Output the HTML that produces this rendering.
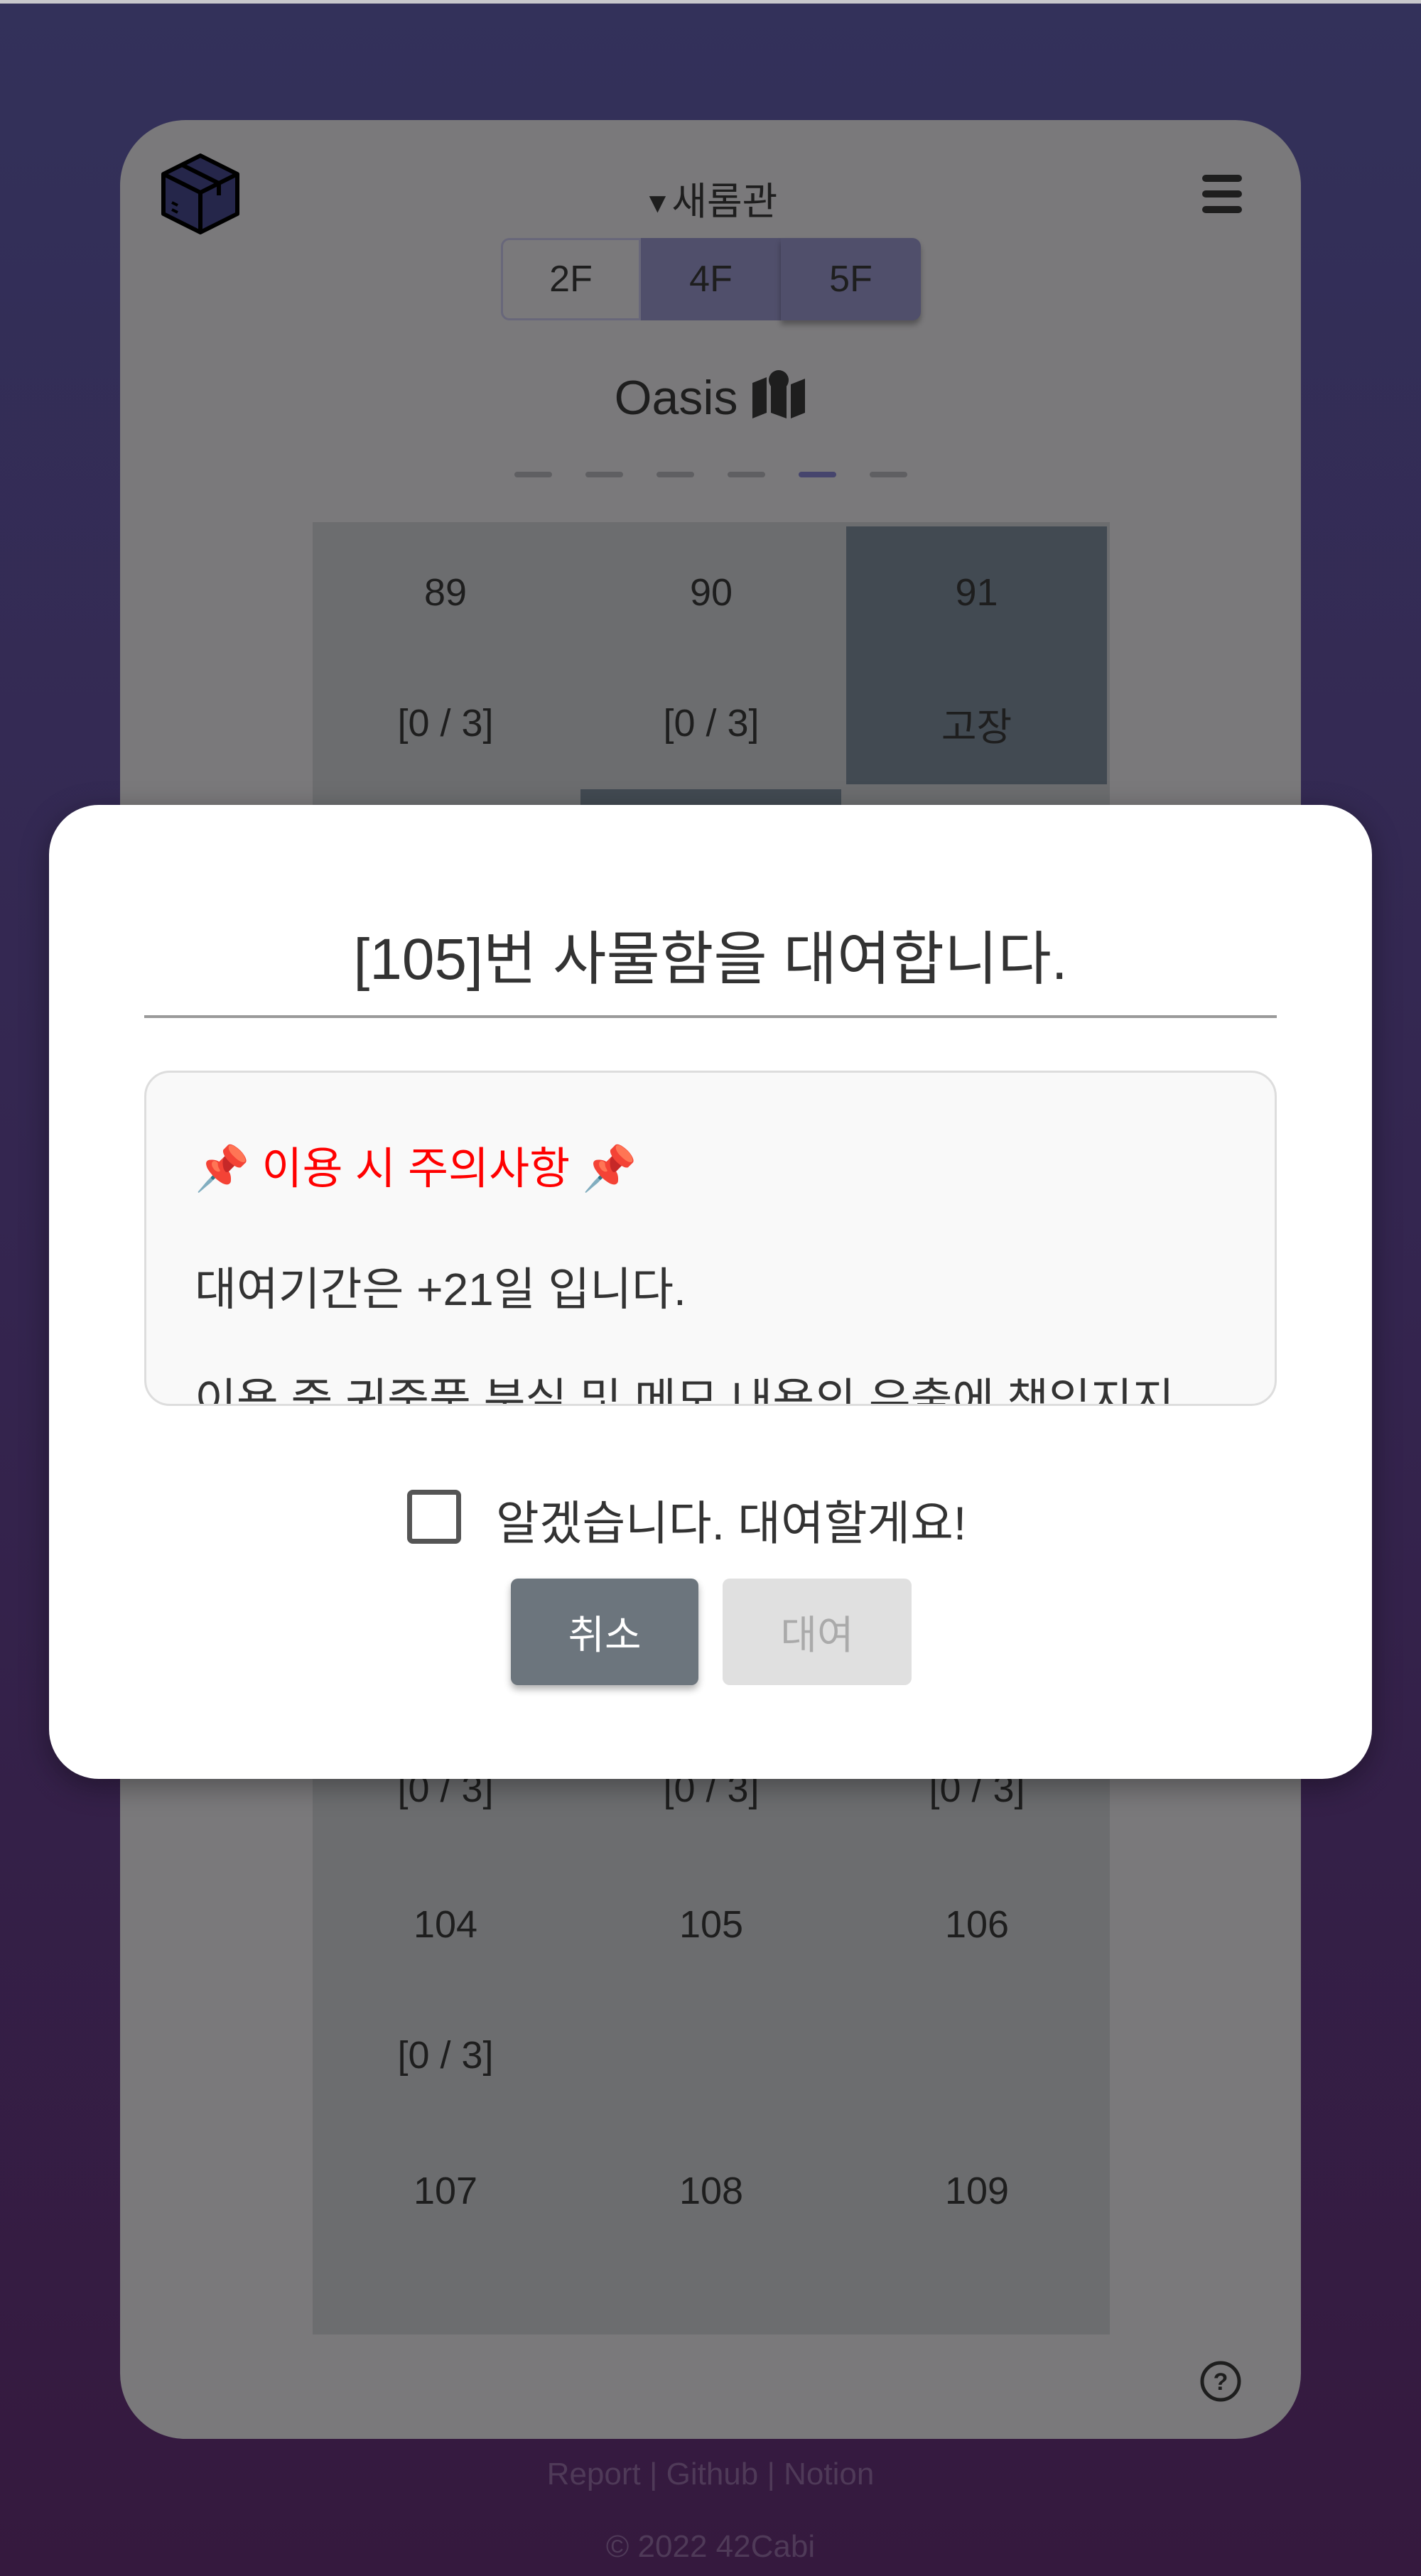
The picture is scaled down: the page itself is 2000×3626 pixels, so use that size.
<!DOCTYPE html>
<html><head><meta charset="utf-8">
<style>
*{margin:0;padding:0;box-sizing:border-box}
html,body{width:2000px;height:3626px;overflow:hidden}
body{background:linear-gradient(180deg,#33315a 0%,#34254f 50%,#35193e 100%);font-family:"Liberation Sans","Noto Sans CJK KR",sans-serif;position:relative}
.topstrip{position:absolute;left:0;top:0;width:2000px;height:5px;background:#c8c8cc}
.card{position:absolute;left:169px;top:169px;width:1662px;height:3264px;border-radius:92px;background:#7a797b;overflow:hidden}
.abs{position:absolute}
.title{left:0;width:1662px;top:70px;text-align:center;font-size:54px;color:#1e1e1e}
.floors{left:536px;top:166px;width:592px;height:116px;display:flex}
.floors div{width:197px;height:116px;display:flex;align-items:center;justify-content:center;font-size:52px;color:#1e1e1e}
.f2{border:3px solid #68677a;border-radius:12px 0 0 12px;background:#7a797b}
.f4{background:#504f6b}
.f5{background:#504f6b;border-radius:0 12px 12px 0;box-shadow:0 6px 8px rgba(0,0,0,.3)}
.oasis{left:0;width:1662px;top:350px;text-align:center;font-size:68px;color:#1e1e1e}
.dash{top:495px;width:53px;height:8px;border-radius:4px;background:#5f5f62}
.grid{left:271px;top:566px;width:1122px;height:2551px;background:#6c6d6f;overflow:hidden}
.cell{position:absolute;width:374px;height:375px;text-align:center;color:#1e1e1e;font-size:54px}
.cell .n{position:absolute;top:68px;width:100%}
.cell .s{position:absolute;top:252px;width:100%}
.dark{background:#424a52}
.modal{position:absolute;left:69px;top:1133px;width:1862px;height:1371px;background:#fff;border-radius:70px;box-shadow:0 10px 40px rgba(0,0,0,.35)}
.mt{position:absolute;left:0;width:1862px;top:150px;text-align:center;font-size:82px;color:#333}
.hr{position:absolute;left:134px;top:296px;width:1594px;height:4px;background:#9a9a9a}
.box{position:absolute;left:134px;top:374px;width:1594px;height:472px;background:#f9f9f9;border:3px solid #ddd;border-radius:36px;overflow:hidden}
.red{position:absolute;left:68px;top:84px;font-size:62px;color:#f00}
.l2{position:absolute;left:68px;top:254px;font-size:64px;color:#333}
.l3{position:absolute;left:68px;top:410px;font-size:64px;color:#333;white-space:nowrap}
.chk{position:absolute;left:504px;top:964px;width:76px;height:76px;border:7px solid #555;border-radius:8px}
.cl{position:absolute;left:629px;top:958px;font-size:66px;color:#333}
.b1{position:absolute;left:650px;top:1089px;width:264px;height:150px;background:#6c757d;color:#fff;border-radius:10px;display:flex;align-items:center;justify-content:center;font-size:56px;box-shadow:0 6px 10px rgba(0,0,0,.3)}
.b2{position:absolute;left:948px;top:1089px;width:266px;height:150px;background:#e0e0e0;color:#aaa;border-radius:10px;display:flex;align-items:center;justify-content:center;font-size:56px}
.foot{position:absolute;left:0;width:2000px;text-align:center;color:#4f3a58;font-size:44px}
</style></head><body>
<div class="topstrip"></div>
<div class="card">
  <svg class="abs" style="left:55px;top:46px" width="116" height="116" viewBox="0 0 116 116">
    <polygon points="58,4 110,30 110,86 58,112 6,86 6,30" fill="#25264a" stroke="#000" stroke-width="6" stroke-linejoin="round"/>
    <polyline points="6,30 58,56 110,30" fill="none" stroke="#000" stroke-width="6"/>
    <line x1="58" y1="56" x2="58" y2="112" stroke="#000" stroke-width="6"/>
    <polyline points="32,17 84,43 84,60" fill="none" stroke="#000" stroke-width="6"/>
    <line x1="18" y1="70" x2="26" y2="74" stroke="#000" stroke-width="4"/>
    <line x1="18" y1="80" x2="26" y2="84" stroke="#000" stroke-width="4"/>
  </svg>
  <div class="abs title"><span style="font-size:40px;vertical-align:3px">▼</span>새롬관</div>
  <div class="abs" style="left:1523px;top:77px;width:56px;height:10px;background:#1e1e1e;border-radius:5px"></div>
  <div class="abs" style="left:1523px;top:99px;width:56px;height:10px;background:#1e1e1e;border-radius:5px"></div>
  <div class="abs" style="left:1523px;top:121px;width:56px;height:10px;background:#1e1e1e;border-radius:5px"></div>
  <div class="abs floors"><div class="f2">2F</div><div class="f4">4F</div><div class="f5">5F</div></div>
  <div class="abs oasis">Oasis <svg width="78" height="70" viewBox="0 0 78 70" style="vertical-align:-6px"><path d="M2 20 L22 12 L22 62 L2 70Z M28 12 L50 22 L50 70 L28 62Z M56 22 L76 14 L76 62 L56 70Z" fill="#1e1e1e"/><circle cx="39" cy="16" r="14" fill="#1e1e1e"/></svg></div>
  <div class="abs dash" style="left:555px"></div>
  <div class="abs dash" style="left:655px"></div>
  <div class="abs dash" style="left:755px"></div>
  <div class="abs dash" style="left:855px"></div>
  <div class="abs dash" style="left:955px;background:#46456d"></div>
  <div class="abs dash" style="left:1055px"></div>
  <div class="abs grid">
    <div class="cell" style="left:0;top:0"><div class="n">89</div><div class="s">[0 / 3]</div></div>
    <div class="cell" style="left:374px;top:0"><div class="n">90</div><div class="s">[0 / 3]</div></div>
    <div class="cell dark" style="left:751px;top:6px;width:367px;height:363px"><div class="n" style="top:62px">91</div><div class="s" style="top:238px">고장</div></div>
    <div class="cell dark" style="left:377px;top:376px;width:367px;height:363px"></div>
    <div class="cell" style="left:0;top:1500px"><div class="n">101</div><div class="s">[0 / 3]</div></div>
    <div class="cell" style="left:374px;top:1500px"><div class="n">102</div><div class="s">[0 / 3]</div></div>
    <div class="cell" style="left:748px;top:1500px"><div class="n">103</div><div class="s">[0 / 3]</div></div>
    <div class="cell" style="left:0;top:1875px"><div class="n">104</div><div class="s">[0 / 3]</div></div>
    <div class="cell" style="left:374px;top:1875px"><div class="n">105</div></div>
    <div class="cell" style="left:748px;top:1875px"><div class="n">106</div></div>
    <div class="cell" style="left:0;top:2250px"><div class="n">107</div></div>
    <div class="cell" style="left:374px;top:2250px"><div class="n">108</div></div>
    <div class="cell" style="left:748px;top:2250px"><div class="n">109</div></div>
  </div>
  <svg class="abs" style="left:1519px;top:3153px" width="60" height="60" viewBox="0 0 60 60"><circle cx="30" cy="30" r="26" fill="none" stroke="#1e1e1e" stroke-width="5"/><text x="30" y="42" text-anchor="middle" font-size="34" font-family="Liberation Sans" font-weight="bold" fill="#1e1e1e">?</text></svg>
</div>
<div class="foot" style="top:3458px">Report | Github | Notion</div>
<div class="foot" style="top:3560px">© 2022 42Cabi</div>

<div class="modal">
  <div class="mt">[105]번 사물함을 대여합니다.</div>
  <div class="hr"></div>
  <div class="box">
    <div class="red">📌 이용 시 주의사항 📌</div>
    <div class="l2">대여기간은 +21일 입니다.</div>
    <div class="l3">이용 중 귀중품 분실 및 메모 내용의 유출에 책임지지</div>
  </div>
  <div class="chk"></div>
  <div class="cl">알겠습니다. 대여할게요!</div>
  <div class="b1">취소</div>
  <div class="b2">대여</div>
</div>
</body></html>
